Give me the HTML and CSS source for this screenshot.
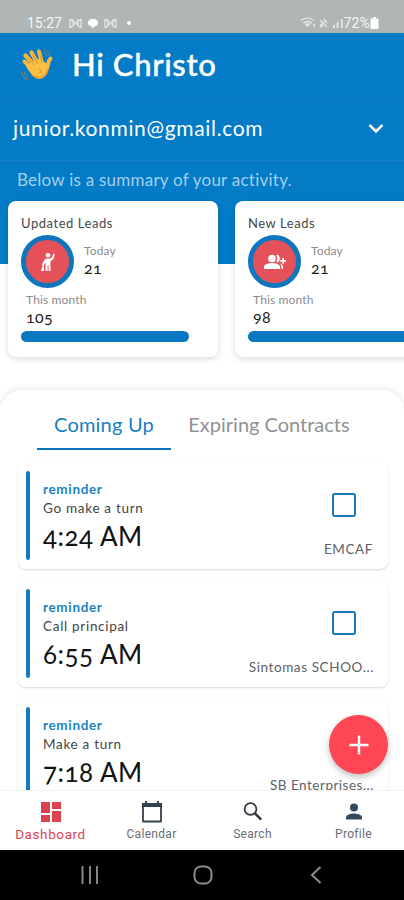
FILE: index.html
```html
<!DOCTYPE html>
<html lang="en">
<head>
    <meta charset="UTF-8">
    <meta name="viewport" content="width=device-width, initial-scale=1">
    <title>Dashboard</title>
    <link rel="stylesheet" href="styles.css">
</head>
<body>
<div class="app">

    <!-- Status bar -->
    <div class="status-bar">
        <div class="status-left">
            <span class="clock">15:27</span>
            <svg width="13" height="11" viewBox="0 0 13 11"><path d="M1 1v9M12 1v9M1 1l5.500 4L12 1M1 10l5.500-5 5.500 5M4 1v8M9 1v8" fill="none" stroke="#e4e8e8" stroke-width="1.200"/></svg>
            <svg width="12" height="11" viewBox="0 0 12 11"><path d="M6 .8c3 0 5 1.700 5 3.900S9 8.300 7.500 8.500L5.500 10.500 5 8.500C2.500 8.200 1 6.700 1 4.700 1 2.500 3 .8 6 .8z" fill="#fff"/></svg>
            <svg width="13" height="11" viewBox="0 0 13 11"><path d="M1 1v9M12 1v9M1 1l5.500 4L12 1M1 10l5.500-5 5.500 5M4 1v8M9 1v8" fill="none" stroke="#e4e8e8" stroke-width="1.200"/></svg>
            <span class="dot"></span>
        </div>
        <div class="status-right">
            <svg width="46" height="13" viewBox="0 0 46 13">
                <g fill="none" stroke="#e4e8e8" stroke-width="1.300">
                    <path d="M1 3.500c4-3 9-3 13 0M3 6c3-2 6-2 9 0"/>
                    <path d="M20 3l7 7M20 7l3 3M24 2l3 4M20 10l4-5"/>
                </g>
                <path d="M4 6.500h7L7.500 10zM13 8l2-2v5zM33 11V8.500l2-1V11zM36.500 11V6l2-1.500V11zM41 11V2h1.700v9z" fill="#e4e8e8"/>
            </svg>
            <span class="battery-text">72%</span>
            <svg width="9" height="12" viewBox="0 0 9 12"><path d="M3 0h3v1.500h2.500V12h-8V1.500H3z" fill="#fff"/></svg>
        </div>
    </div>

    <!-- Header -->
    <header class="header">
        <div class="greeting">
            <svg class="wave" width="34" height="36" viewBox="0 0 34 36">
                <g fill="none" stroke="#6f8377" stroke-width="1.200" stroke-linecap="round">
                    <path d="M24 2.500c3 .5 5 3 5.500 6M24 5.500c1.500.5 2.500 1.500 3 3M2 25c0 4 2.500 7 6 8M4.500 25c.3 2.300 1.500 4 3.500 5"/>
                </g>
                <g stroke="#f7b63c" stroke-linecap="round" fill="none">
                    <path d="M4.500 14.500L14 24" stroke-width="4"/>
                    <path d="M5.500 8.500L16 20" stroke-width="4.200"/>
                    <path d="M11.500 5.500L19 19" stroke-width="4.200"/>
                    <path d="M19 4.500L22.500 18" stroke-width="4"/>
                    <path d="M30.500 11.500C28 14 28.500 17 27 21" stroke-width="4"/>
                </g>
                <path d="M8 17L20 11.500l6.500 5 2.500 2c0 7-3.500 12.500-9.500 13.500C14 32.500 8 23 6 19z" fill="#fbbf45"/>
                <path d="M12 28c5 4.500 13 3.500 16.500-7" fill="none" stroke="#e89a2b" stroke-width="1.300"/>
                <path d="M7.500 10.500l7 7.500M13 8l4.500 9M20 7.500l2 9M19 21.500c1.500 1 2.500 2.500 2.300 5" fill="none" stroke="#dc8f2c" stroke-width=".9"/>
            </svg>
            <h1>Hi Christo</h1>
        </div>
        <div class="account">
            <span class="email">junior.konmin@gmail.com</span>
            <svg width="18" height="12" viewBox="0 0 18 12"><path d="M2.500 2L9 8.500 15.500 2" fill="none" stroke="#fff" stroke-width="2.600"/></svg>
        </div>
        <p class="summary">Below is a summary of your activity.</p>
    </header>

    <!-- Lead cards -->
    <section class="cards">
        <div class="card">
            <h2>Updated Leads</h2>
            <div class="today">
                <div class="badge">
                    <svg width="18" height="22" viewBox="0 0 18 22" fill="#fff"><circle cx="9" cy="4.300" r="2.300"/><path d="M14.300 2.500l1.500.7-1.600 5.200-2.700 1.700V20H9.600v-5.500h-1V20H6.500v-8.500L5 13.500V15H3.300v-2.500l3-4.700 5-.3 1.800-1.200zM3.300 15.500H5V20H2z"/></svg>
                </div>
                <div>
                    <div class="label">Today</div>
                    <div class="value">21</div>
                </div>
            </div>
            <div class="month">
                <div class="label">This month</div>
                <div class="value">105</div>
            </div>
            <div class="progress"></div>
        </div>
        <div class="card">
            <h2>New Leads</h2>
            <div class="today">
                <div class="badge">
                    <svg width="24" height="18" viewBox="0 0 24 18" fill="#fff"><circle cx="9" cy="5.500" r="3.800"/><path d="M1 16v-2c0-3 5-4 8-4s8 1 8 4v2zM13 2c5-1.500 5 8.500 0 7.300 1.700-2 1.700-5.300 0-7.300zM16.500 10.300c2 .7 3.500 1.700 3.500 3.700v2h-1.700v-2c0-1.700-.6-2.700-1.800-3.700zM19.300 5H21v2h2v1.700h-2v2h-1.700v-2h-2V7h2z"/></svg>
                </div>
                <div>
                    <div class="label">Today</div>
                    <div class="value">21</div>
                </div>
            </div>
            <div class="month">
                <div class="label">This month</div>
                <div class="value">98</div>
            </div>
            <div class="progress"></div>
        </div>
    </section>

    <!-- Reminders -->
    <main class="panel">
        <div class="tabs">
            <div class="tab active">Coming Up</div>
            <div class="tab expiring">Expiring Contracts</div>
        </div>
        <div class="reminder">
            <div class="bar"></div>
            <div class="info">
                <div class="type">reminder</div>
                <div class="title">Go make a turn</div>
                <div class="time">4:24 AM</div>
            </div>
            <div class="side">
                <div class="checkbox"></div>
                <div class="company short">EMCAF</div>
            </div>
        </div>
        <div class="reminder">
            <div class="bar"></div>
            <div class="info">
                <div class="type">reminder</div>
                <div class="title">Call principal</div>
                <div class="time">6:55 AM</div>
            </div>
            <div class="side">
                <div class="checkbox"></div>
                <div class="company">Sintomas SCHOO...</div>
            </div>
        </div>
        <div class="reminder">
            <div class="bar"></div>
            <div class="info">
                <div class="type">reminder</div>
                <div class="title">Make a turn</div>
                <div class="time">7:18 AM</div>
            </div>
            <div class="side">
                <div class="checkbox covered"></div>
                <div class="company narrow">SB Enterprises...</div>
            </div>
        </div>
        <div class="fab">
            <svg width="20" height="20" viewBox="0 0 20 20"><path d="M10 .5v19M.5 10h19" stroke="#fff" stroke-width="2.400"/></svg>
        </div>
    </main>

    <!-- Bottom navigation -->
    <nav class="bottom-nav">
        <div class="nav-item active">
            <svg width="24" height="24" viewBox="0 0 24 24" fill="#dc4350"><path d="M2 2h9v11H2zM13 2h9v7h-9zM2 15h9v7H2zM13 11h9v11h-9z"/></svg>
            <span>Dashboard</span>
        </div>
        <div class="nav-item">
            <svg width="24" height="24" viewBox="0 0 24 24"><path d="M3 4h18v17.500H3z" fill="none" stroke="#34414f" stroke-width="1.800" stroke-linejoin="round"/><path d="M2 3h20v4H2zM5 1h2v3H5zM17 1h2v3h-2z" fill="#34414f"/></svg>
            <span>Calendar</span>
        </div>
        <div class="nav-item">
            <svg width="24" height="24" viewBox="0 0 24 24" fill="none" stroke="#333b42"><circle cx="9.500" cy="9" r="5.900" stroke-width="1.800"/><path d="M13.700 13.200l6.500 6.500" stroke-width="2.400"/></svg>
            <span>Search</span>
        </div>
        <div class="nav-item">
            <svg width="24" height="24" viewBox="0 0 24 24" fill="#34495c"><circle cx="12" cy="7.500" r="4"/><path d="M4 19.500V17.500C4 14.500 9 13.500 12 13.500s8 1 8 4v2z"/></svg>
            <span>Profile</span>
        </div>
    </nav>

    <!-- System buttons -->
    <div class="system-nav">
        <svg width="20" height="18" viewBox="0 0 20 18"><path d="M2.500 0v18M10 0v18M17 0v18" stroke="#8c8c8c" stroke-width="1.900"/></svg>
        <svg width="20" height="20" viewBox="0 0 20 20"><rect x="1.500" y="1.500" width="17" height="17" rx="6.500" fill="none" stroke="#8c8c8c" stroke-width="2"/></svg>
        <svg width="12" height="18" viewBox="0 0 12 18"><path d="M10.500 1L2 9l8.500 8" fill="none" stroke="#8c8c8c" stroke-width="2"/></svg>
    </div>
</div>
</body>
</html>
```
FILE: styles.css
```css
* {
    box-sizing: border-box;
}

body {
    margin: 0;
    font-family: Lato, "Open Sans", sans-serif;
    font-variant-numeric: oldstyle-nums;
    background: #fff;
}

svg {
    display: block;
    flex-shrink: 0;
}

h1, h2, p {
    margin: 0;
}

.app {
    display: flex;
    flex-direction: column;
    height: 900px;
    overflow: hidden;
    white-space: nowrap;
}

/* status bar */
.status-bar {
    display: flex;
    justify-content: space-between;
    height: 33px;
    padding: 12px 25px 0 27px;
    background: #b0b6b5;
    color: #f5f7f7;
    font-family: Roboto, sans-serif;
    font-variant-numeric: normal;
    font-size: 14px;
    line-height: 22px;
}

.status-left, .status-right {
    display: flex;
    align-items: center;
    height: 22px;
}

.status-left {
    gap: 5px;
}

.clock {
    width: 37px;
}

.dot {
    width: 4px;
    height: 4px;
    margin-left: 5px;
    border-radius: 50%;
    background: #fff;
}

.status-right svg:first-child {
    margin-right: -3px;
}

.battery-text {
    letter-spacing: 0.2px;
}

/* header */
.header {
    flex-shrink: 0;
    height: 231px;
    background: #037bc6;
    color: #fff;
}

.greeting {
    display: flex;
    align-items: center;
    gap: 18px;
    height: 64px;
    padding-left: 20px;
    border-bottom: 1px solid #0a74ba;
}

.greeting h1 {
    font-size: 31px;
    font-weight: 500;
    line-height: 38px;
    letter-spacing: 0.65px;
    padding-bottom: 2px;
    -webkit-text-stroke: 0.4px #fff;
}

.account {
    display: flex;
    align-items: center;
    justify-content: space-between;
    height: 64px;
    padding: 0 19px 0 13px;
    border-bottom: 1px solid #1a80c4;
}

.email {
    font-size: 21px;
    letter-spacing: 0.66px;
    padding-bottom: 2px;
}

.summary {
    padding: 7px 17px 0;
    color: #a3cfec;
    font-size: 17px;
    line-height: 24px;
    letter-spacing: 0.24px;
}

/* cards */
.cards {
    display: flex;
    flex-shrink: 0;
    gap: 17px;
    height: 156px;
    margin: -63px 0 0 8px;
}

.card {
    flex: 0 0 210px;
    padding: 13px 13px 0;
    border-radius: 8px;
    background: #fff;
    box-shadow: 0 2px 6px rgba(0, 0, 0, 0.14);
}

.card h2 {
    color: #48484b;
    font-size: 13px;
    font-weight: 400;
    line-height: 18px;
    letter-spacing: 0.55px;
}

.today {
    display: flex;
    gap: 10px;
    margin-top: 3px;
}

.badge {
    display: flex;
    align-items: center;
    justify-content: center;
    width: 53px;
    height: 53px;
    border: 5px solid #0d76bd;
    border-radius: 50%;
    background: #e55158;
}

.today .label {
    margin-top: 8px;
}

.label {
    color: #8b8b8d;
    font-size: 12px;
    line-height: 16px;
    letter-spacing: 0.15px;
}

.value {
    color: #1d1d20;
    font-size: 16px;
    line-height: 18px;
    letter-spacing: 0.4px;
}

.month {
    height: 42px;
    padding: 4px 0 0 5px;
}

.progress {
    width: 168px;
    height: 11px;
    margin-top: 1px;
    border-radius: 6px;
    background: #0878c1;
}

.card:last-child .progress {
    width: 190px;
}

/* reminders */
.panel {
    flex: 1;
    min-height: 0;
    margin-top: 33px;
    padding: 0 16px 0 18px;
    border-radius: 22px 22px 0 0;
    background: #fff;
    box-shadow: 0 -2px 6px rgba(0, 0, 0, 0.09);
    overflow: hidden;
}

.tabs {
    display: flex;
    height: 60px;
    margin: 0 0 13px 19px;
}

.tab {
    width: 134px;
    color: #8f9193;
    font-size: 20px;
    line-height: 68px;
    text-align: center;
}

.tab.active {
    border-bottom: 2px solid #0b72b9;
    color: #187fc0;
    letter-spacing: 0.2px;
}

.tab.expiring {
    width: 196px;
}

.reminder {
    display: flex;
    height: 106px;
    margin-bottom: 12px;
    padding: 8px 14px 0 8px;
    border-radius: 8px;
    background: #fff;
    box-shadow: 0 1px 2px rgba(0, 0, 0, 0.16);
}

.bar {
    width: 4px;
    height: 89px;
    border-radius: 2px;
    background: #137cbf;
}

.info {
    flex: 1;
    padding: 9px 0 0 13px;
}

.type {
    color: #1b82c1;
    font-size: 13.5px;
    font-weight: 700;
    line-height: 18px;
    letter-spacing: 0.65px;
}

.title {
    color: #444;
    font-size: 13.5px;
    line-height: 20px;
    letter-spacing: 0.7px;
}

.time {
    color: #111;
    font-size: 26px;
    line-height: 36px;
    letter-spacing: 0.5px;
}

.side {
    display: flex;
    flex-direction: column;
    align-items: flex-end;
    padding-top: 22px;
}

.checkbox {
    width: 24px;
    height: 24px;
    margin-right: 18px;
    border: 2px solid #1a78b8;
    border-radius: 3px;
}

/* sits under the floating button */
.checkbox.covered {
    visibility: hidden;
}

.company {
    margin-top: 23px;
    color: #606265;
    font-size: 13.5px;
    line-height: 18px;
    letter-spacing: 0.6px;
}

.company.short {
    margin-right: 1px;
}

.company.narrow {
    letter-spacing: 0.5px;
}

.fab {
    position: absolute;
    top: 715px;
    left: 329px;
    display: flex;
    align-items: center;
    justify-content: center;
    width: 59px;
    height: 59px;
    border-radius: 50%;
    background: #fe4655;
    box-shadow: 0 3px 6px rgba(0, 0, 0, 0.25);
}

/* bottom navigation */
.bottom-nav {
    display: flex;
    flex-shrink: 0;
    height: 60px;
    border-top: 1px solid #f3f3f3;
    background: #fff;
}

.nav-item {
    display: flex;
    flex: 1;
    flex-direction: column;
    align-items: center;
    padding-top: 9px;
    color: #6b6e71;
    font-family: Roboto, sans-serif;
    font-size: 12px;
    line-height: 20px;
    letter-spacing: 0.3px;
}

.nav-item.active {
    color: #dc4350;
    font-size: 13.5px;
    letter-spacing: 0.6px;
}

.system-nav {
    display: flex;
    flex-shrink: 0;
    align-items: center;
    gap: 93px;
    height: 50px;
    padding-left: 80px;
    background: #000;
}

.system-nav svg:last-child {
    margin-left: 4px;
}
```
